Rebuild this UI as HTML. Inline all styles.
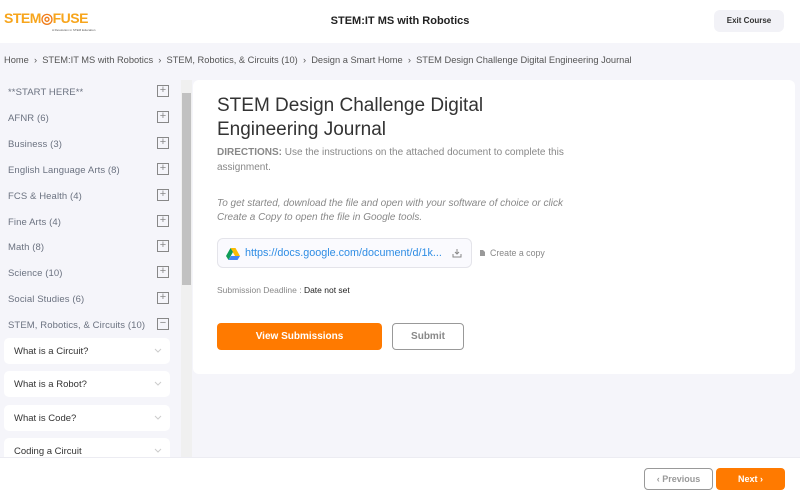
<!DOCTYPE html><html><head><style>
*{margin:0;padding:0;box-sizing:border-box}
body{width:800px;height:500px;background:#f5f5fa;font-family:"Liberation Sans",sans-serif;position:relative;overflow:hidden}
.a{position:absolute}
.hdr{left:0;top:0;width:800px;height:43px;background:#fff}
.side div.i{position:absolute;left:8px;font-size:9.5px;color:#6b7280;letter-spacing:0.1px}
.pl{position:absolute;left:157px;width:12px;height:12px;border:1px solid #888;color:#888;font-size:11px;line-height:9px;text-align:center}
.sub{position:absolute;left:4px;width:166px;height:26px;background:#fff;border-radius:5px;font-size:9.5px;color:#333;padding:8px 10px}
.sub svg{position:absolute;right:8px;top:10px}
</style></head><body>
<div class="a hdr"></div>
<div class="a" style="left:4px;top:10px;font-size:14px;font-weight:bold;color:#f7a51c;letter-spacing:-0.5px">STEM<span style="color:#f07d1a">◎</span>FUSE</div>
<div class="a" style="left:52px;top:28px;font-size:3px;color:#555">A Revolution in STEM Education</div>
<div class="a" style="left:0;width:800px;top:15px;text-align:center;font-size:11px;font-weight:bold;color:#222">STEM:IT MS with Robotics</div>
<div class="a" style="left:714px;top:10px;width:70px;height:22px;background:#f2f2f7;border-radius:6px;font-size:8px;font-weight:bold;color:#333;text-align:center;line-height:22px">Exit Course</div>
<div class="a" style="left:4px;top:55px;font-size:9.3px;color:#555;white-space:nowrap">Home &nbsp;›&nbsp; STEM:IT MS with Robotics &nbsp;›&nbsp; STEM, Robotics, &amp; Circuits (10) &nbsp;›&nbsp; Design a Smart Home &nbsp;›&nbsp; STEM Design Challenge Digital Engineering Journal</div>
<div class="side">
<div class="i" style="top:87px">**START HERE**</div><div class="pl" style="top:85px">+</div>
<div class="i" style="top:113px">AFNR (6)</div><div class="pl" style="top:111px">+</div>
<div class="i" style="top:139px">Business (3)</div><div class="pl" style="top:137px">+</div>
<div class="i" style="top:165px">English Language Arts (8)</div><div class="pl" style="top:163px">+</div>
<div class="i" style="top:191px">FCS &amp; Health (4)</div><div class="pl" style="top:189px">+</div>
<div class="i" style="top:217px">Fine Arts (4)</div><div class="pl" style="top:215px">+</div>
<div class="i" style="top:242px">Math (8)</div><div class="pl" style="top:240px">+</div>
<div class="i" style="top:268px">Science (10)</div><div class="pl" style="top:266px">+</div>
<div class="i" style="top:294px">Social Studies (6)</div><div class="pl" style="top:292px">+</div>
<div class="i" style="top:320px">STEM, Robotics, &amp; Circuits (10)</div><div class="pl" style="top:318px">−</div>
<div class="sub" style="top:338px">What is a Circuit?<svg width="8" height="5"><path d="M1 1l3 3 3-3" stroke="#ccc" fill="none"/></svg></div>
<div class="sub" style="top:371px">What is a Robot?<svg width="8" height="5"><path d="M1 1l3 3 3-3" stroke="#ccc" fill="none"/></svg></div>
<div class="sub" style="top:405px">What is Code?<svg width="8" height="5"><path d="M1 1l3 3 3-3" stroke="#ccc" fill="none"/></svg></div>
<div class="sub" style="top:438px">Coding a Circuit<svg width="8" height="5"><path d="M1 1l3 3 3-3" stroke="#ccc" fill="none"/></svg></div>
</div>
<div class="a" style="left:181px;top:80px;width:11px;height:377px;background:#f0f0f0"></div>
<div class="a" style="left:182px;top:93px;width:9px;height:192px;background:#c1c1c1"></div>
<div class="a" style="left:193px;top:80px;width:602px;height:294px;background:#fff;border-radius:6px"></div>
<div class="a" style="left:217px;top:94px;font-size:19px;color:#333;line-height:24px">STEM Design Challenge Digital<br>Engineering Journal</div>
<div class="a" style="left:217px;top:145px;width:370px;font-size:10px;color:#888;line-height:15px"><b>DIRECTIONS:</b> Use the instructions on the attached document to complete this assignment.</div>
<div class="a" style="left:217px;top:197px;width:370px;font-size:10px;color:#888;font-style:italic;line-height:14px">To get started, download the file and open with your software of choice or click Create a Copy to open the file in Google tools.</div>
<div class="a" style="left:217px;top:238px;width:255px;height:30px;border:1px solid #e4e4ea;border-radius:6px;background:#fafafe"></div>
<svg class="a" style="left:226px;top:248px" width="14" height="12" viewBox="0 0 14 12"><path d="M4.5 0h5L14 8H9z" fill="#fbbc04"/><path d="M4.5 0 0 8l2.5 4L7 4z" fill="#0f9d58"/><path d="M2.5 12h9L14 8H5z" fill="#4285f4"/></svg>
<div class="a" style="left:245px;top:247px;font-size:10.8px;color:#2f8de4">https://docs.google.com/document/d/1k...</div>
<svg class="a" style="left:452px;top:248px" width="10" height="10"><path d="M5 1v5M3 4l2 2 2-2M1 6v3h8V6" stroke="#888" fill="none"/></svg>
<svg class="a" style="left:479px;top:249px" width="7" height="8"><path d="M1 1h3l2 2v4H1z" fill="#999"/></svg>
<div class="a" style="left:490px;top:248px;font-size:8.8px;color:#888">Create a copy</div>
<div class="a" style="left:217px;top:285px;font-size:8.5px;color:#888">Submission Deadline : <span style="color:#222">Date not set</span></div>
<div class="a" style="left:217px;top:323px;width:165px;height:27px;background:#ff7a00;border-radius:4px;color:#fff;font-size:10px;font-weight:bold;text-align:center;line-height:27px">View Submissions</div>
<div class="a" style="left:392px;top:323px;width:72px;height:27px;border:1px solid #999;border-radius:4px;color:#888;font-size:10px;font-weight:bold;text-align:center;line-height:25px;background:#fff">Submit</div>
<div class="a" style="left:0;top:457px;width:800px;height:43px;background:#fff;border-top:1px solid #ececf2"></div>
<div class="a" style="left:644px;top:468px;width:69px;height:22px;border:1px solid #999;border-radius:4px;color:#999;font-size:9px;font-weight:bold;text-align:center;line-height:20px">‹ Previous</div>
<div class="a" style="left:716px;top:468px;width:69px;height:22px;background:#ff7a00;border-radius:4px;color:#fff;font-size:9px;font-weight:bold;text-align:center;line-height:22px">Next ›</div>
</body></html>
